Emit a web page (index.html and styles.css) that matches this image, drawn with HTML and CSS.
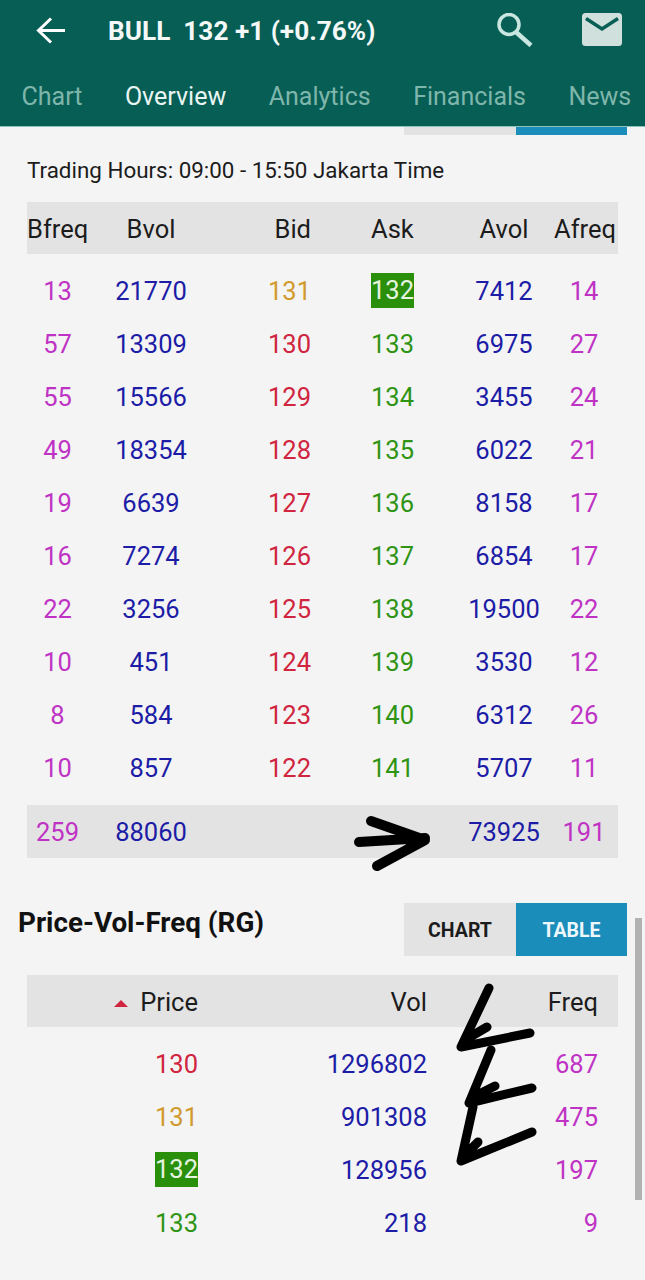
FILE: index.html
```html
<!DOCTYPE html>
<html lang="en">
<head>
    <meta charset="UTF-8">
    <meta name="viewport" content="width=device-width, initial-scale=1.0">
    <title>BULL Overview</title>
    <link rel="stylesheet" href="styles.css">
</head>
<body>
    <div class="screen">
        <header class="app-header">
            <div class="title-bar">
                <svg class="back-icon" viewBox="0 0 29 27" width="29" height="27">
                    <path d="M29 13.500H2.500M15 1.500L2.500 13.500L15 25.500" fill="none" stroke="#fff" stroke-width="3"/>
                </svg>
                <div class="title">BULL&nbsp; 132 +1 (+0.76%)</div>
                <svg class="search-icon" viewBox="0 0 36 34" width="36" height="34">
                    <circle cx="12" cy="11.500" r="10" fill="none" stroke="#c9e6e0" stroke-width="3.500"/>
                    <path d="M19.500 19.500L34 32.500" fill="none" stroke="#c9e6e0" stroke-width="4.500"/>
                </svg>
                <svg class="mail-icon" viewBox="0 0 40 33" width="40" height="33">
                    <rect width="40" height="33" rx="3.500" fill="#cfe0dd"/>
                    <path d="M4 5.500L20 16L36 5.500" fill="none" stroke="#075e55" stroke-width="3.500"/>
                </svg>
            </div>
            <nav class="tabs">
                <span class="tab">Chart</span>
                <span class="tab active">Overview</span>
                <span class="tab">Analytics</span>
                <span class="tab">Financials</span>
                <span class="tab">News</span>
            </nav>
        </header>

        <div class="toggle-edge">
            <span class="edge-grey"></span>
            <span class="edge-blue"></span>
        </div>

        <p class="hours">Trading Hours: 09:00 - 15:50 Jakarta Time</p>

        <!-- order book -->
        <div class="book">
            <div class="book-row shaded head-row">
                <span>Bfreq</span><span>Bvol</span><span class="bid">Bid</span><span class="ask">Ask</span><span>Avol</span><span>Afreq</span>
            </div>
            <div id="bookRows" class="book-rows"></div>
            <div class="book-row shaded total">
                <span class="freq">259</span><span class="vol">88060</span><span></span><span></span><span class="vol">73925</span><span class="freq">191</span>
            </div>
        </div>

        <div class="section-head">
            <h2>Price-Vol-Freq (RG)</h2>
            <div class="toggle">
                <span class="toggle-btn">CHART</span>
                <span class="toggle-btn selected">TABLE</span>
            </div>
        </div>

        <!-- done trades by price -->
        <div class="pvf">
            <div class="pvf-row shaded head-row">
                <span><i class="sort-up"></i>Price</span><span>Vol</span><span>Freq</span>
            </div>
            <div class="pvf-rows">
                <div class="pvf-row"><span class="down">130</span><span class="vol">1296802</span><span class="freq">687</span></div>
                <div class="pvf-row"><span class="prev">131</span><span class="vol">901308</span><span class="freq">475</span></div>
                <div class="pvf-row"><span><b class="last">132</b></span><span class="vol">128956</span><span class="freq">197</span></div>
                <div class="pvf-row"><span class="up">133</span><span class="vol">218</span><span class="freq">9</span></div>
            </div>
        </div>

        <div class="scrollbar"></div>

        <!-- hand drawn marks on top of the tables -->
        <svg class="marks" viewBox="0 0 645 1280" width="645" height="1280">
            <g fill="none" stroke="#000" stroke-width="9" stroke-linecap="round" stroke-linejoin="round">
                <path d="M359 842L425 838M371 821L425 840L377 866" stroke-width="10"/>
                <path d="M489 988L461 1047L530 1033M487 1027L470 1037"/>
                <path d="M491 1050L469 1103L532 1088M495 1086L477 1095"/>
                <path d="M473 1107L461 1161L532 1132M478 1142L470 1150"/>
            </g>
        </svg>
    </div>

    <script>
        // bfreq, bvol, bid, ask, avol, afreq
        const book = [
            [13, 21770, 131, 132, 7412, 14],
            [57, 13309, 130, 133, 6975, 27],
            [55, 15566, 129, 134, 3455, 24],
            [49, 18354, 128, 135, 6022, 21],
            [19, 6639, 127, 136, 8158, 17],
            [16, 7274, 126, 137, 6854, 17],
            [22, 3256, 125, 138, 19500, 22],
            [10, 451, 124, 139, 3530, 12],
            [8, 584, 123, 140, 6312, 26],
            [10, 857, 122, 141, 5707, 11]
        ];

        document.getElementById('bookRows').innerHTML = book.map(function(r, i) {
            const bid = i === 0 ? 'prev' : 'down';
            const ask = i === 0 ? '<b class="last">' + r[3] + '</b>' : r[3];
            return '<div class="book-row">' +
                '<span class="freq">' + r[0] + '</span>' +
                '<span class="vol">' + r[1] + '</span>' +
                '<span class="bid ' + bid + '">' + r[2] + '</span>' +
                '<span class="ask up">' + ask + '</span>' +
                '<span class="vol">' + r[4] + '</span>' +
                '<span class="freq">' + r[5] + '</span>' +
                '</div>';
        }).join('');
    </script>
</body>
</html>
```
FILE: styles.css
```css
* {
    box-sizing: border-box;
}

html, body {
    margin: 0;
    height: 1280px;
    overflow: hidden;
}

body {
    font-family: Roboto, sans-serif;
    background-color: #f4f4f4;
    color: #1c1c1c;
}

.screen {
    position: relative;
    height: 1280px;
    overflow: hidden;
}

.app-header {
    height: 127px;
    background-color: #075e55;
    border-bottom: 1px solid #8cc4bb;
}

.title-bar {
    display: flex;
    align-items: center;
    height: 60px;
    padding-left: 36px;
}

.title {
    margin-left: 43px;
    margin-top: 2px;
    flex: 1;
    font-size: 26.200px;
    font-weight: 700;
    color: #f4f8f7;
}

.search-icon {
    margin-right: 49px;
    margin-top: -1px;
}

.mail-icon {
    margin-right: 23px;
    margin-top: -1px;
}

.tabs {
    display: flex;
    gap: 42.500px;
    padding-left: 21.500px;
    padding-top: 21px;
    font-size: 25px;
    line-height: 32px;
    white-space: nowrap;
}

.tab {
    color: #7fb6ab;
}

.tab.active {
    color: #e9f5f2;
}

.toggle-edge {
    display: flex;
    height: 8px;
    margin-left: 404px;
    width: 223px;
}

.edge-grey {
    flex: 1;
    background-color: #e2e2e2;
}

.edge-blue {
    flex: 1;
    background-color: #1a8dbb;
}

.hours {
    margin: 17px 0 14px 27px;
    font-size: 22.400px;
    line-height: 36px;
}

.book, .pvf {
    margin-left: 27px;
    width: 591px;
}

.book-row {
    display: grid;
    grid-template-columns: 61px 126px 97px 143px 100px 60px;
    align-items: center;
    height: 53px;
    font-size: 25.500px;
    text-align: center;
}

.shaded {
    background-color: #e3e3e3;
}

.head-row {
    height: 52px;
    padding-top: 2px;
}

.book-rows, .pvf-rows {
    padding-top: 10px;
}

.book-row .bid {
    text-align: right;
}

.book-row .ask {
    text-align: left;
    padding-left: 60px;
}

.book-row.total {
    height: 53px;
    margin-top: 11px;
}

.freq {
    color: #bf33c4;
}

.vol {
    color: #1c1ca6;
}

.down {
    color: #d0243f;
}

.prev {
    color: #d19a2e;
}

.up {
    color: #2f9414;
}

.last {
    display: inline-block;
    font-weight: 400;
    line-height: 35px;
    background-color: #2a8f0a;
    color: #e6f4e0;
}

.section-head {
    display: flex;
    justify-content: space-between;
    align-items: flex-start;
    width: 609px;
    margin: 45px 0 19px 18px;
}

.section-head h2 {
    margin: 0;
    font-size: 27.800px;
    font-weight: 700;
    line-height: 40px;
    color: #111;
}

.toggle {
    display: flex;
}

.toggle-btn {
    width: 112px;
    height: 53px;
    background-color: #e3e3e3;
    font-size: 19.500px;
    font-weight: 700;
    line-height: 56px;
    text-align: center;
}

.toggle-btn.selected {
    width: 111px;
    background-color: #1a8dbb;
    color: #eef7fb;
}

.pvf-row {
    display: grid;
    grid-template-columns: 171px 229px 171px;
    align-items: center;
    height: 53px;
    font-size: 25.500px;
    text-align: right;
}

.pvf-row.head-row {
    height: 52px;
}

.sort-up {
    display: inline-block;
    width: 0;
    height: 0;
    margin-right: 12px;
    border-left: 7px solid transparent;
    border-right: 7px solid transparent;
    border-bottom: 7px solid #d0243f;
    vertical-align: 4px;
}

.scrollbar {
    position: absolute;
    left: 635px;
    top: 918px;
    width: 7px;
    height: 282px;
    background-color: #b2b2b2;
}

.marks {
    position: absolute;
    left: 0;
    top: 0;
    pointer-events: none;
}
```
